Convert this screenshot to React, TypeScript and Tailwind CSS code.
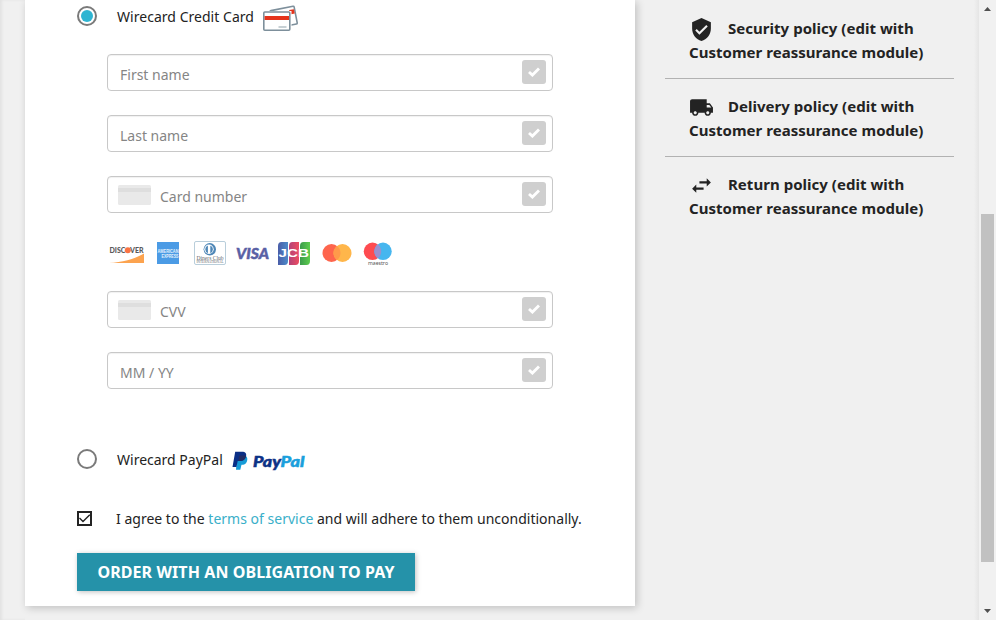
import type { ReactNode } from "react";
import { MdLocalShipping, MdSwapHoriz, MdVerifiedUser } from "react-icons/md";

function Tick() {
  return (
    <span className="mt-[5px] mr-1.5 flex h-6 w-6 items-center justify-center rounded-[3px] bg-[#cfcfcf]">
      <svg width="12" height="10" viewBox="0 0 12 10" fill="none" stroke="#fff" strokeWidth="2.8">
        <path d="M1 4.9 4.4 8.1 11 1.4" />
      </svg>
    </span>
  );
}

function CardThumb() {
  return (
    <svg className="mt-2 ml-2.5 mr-[9px] shrink-0" width="33" height="20" viewBox="0 0 33 20">
      <rect width="33" height="20" rx="1.5" fill="#e9e9e9" />
      <rect y="3" width="33" height="4" fill="#dedede" />
    </svg>
  );
}

function Field({ label, card = false }: { label: string; card?: boolean }) {
  return (
    <div className="flex h-[37px] w-[446px] rounded-[4px] border border-[#c8c8c8] bg-white shadow-[inset_0_1px_1px_rgba(0,0,0,0.06)]">
      {card ? <CardThumb /> : <span className="w-3" />}
      <span className="flex-1 pt-[10px] text-[14px] leading-5 text-[#858585]">{label}</span>
      <Tick />
    </div>
  );
}

function CreditCards() {
  return (
    <svg width="36" height="27" viewBox="0 0 36 27">
      <g transform="rotate(-11 22 10)">
        <rect x="8" y="3" width="24.5" height="18" rx="1" fill="#fff" stroke="#7d8f9b" strokeWidth="1.6" />
        <path d="M27 6h4.800v4.500H27z" fill="#e5331b" />
      </g>
      <rect x="0" y="6" width="28.500" height="21" fill="#fff" />
      <rect x=".8" y="7" width="26" height="18.200" rx="1" fill="#fff" stroke="#7d8f9b" strokeWidth="1.6" />
      <path d="M1.600 11h24.400v4H1.600z" fill="#e5331b" />
      <path d="M15.500 22h8" stroke="#a9b6bd" strokeWidth="1.3" />
    </svg>
  );
}

function PayPal() {
  return (
    <svg width="74" height="20" viewBox="0 0 74 20">
      <path d="M5 5h9c1.600 1.500 1.600 3.700.9 5.400-1 2.600-3 3.400-5.400 3.400L8.300 18.700H4z" fill="#169bd7" />
      <path d="M3.200.7H10c3.500 0 4.800 1.700 4 4.800-.8 3.200-3 4.600-6.200 4.600H5.700L4.400 16H.5z" fill="#0b2f86" />
      <path d="M6.300 10.100h1.500c3.200 0 5.400-1.400 6.200-4.600-.1-.6-.5-.9-1.400-1H7.300z" fill="#222d65" />
      <g fontFamily="Lato, sans-serif" fontWeight="900" fontStyle="italic" fontSize="15" strokeWidth=".5">
        <text x="21" y="15.500" textLength="28" lengthAdjust="spacingAndGlyphs" fill="#0b3286" stroke="#0b3286">Pay</text>
        <text x="48.500" y="15.500" textLength="24" lengthAdjust="spacingAndGlyphs" fill="#1a9fdc" stroke="#1a9fdc">Pal</text>
      </g>
    </svg>
  );
}

function Brands() {
  return (
    <svg className="mt-[26px] block" width="290" height="28" viewBox="0 0 290 28">
      <defs>
        <linearGradient id="jcbBlue"><stop stopColor="#4a5da8" /><stop offset="1" stopColor="#4c8bc9" /></linearGradient>
        <linearGradient id="jcbRed"><stop stopColor="#b24278" /><stop offset="1" stopColor="#ed4c60" /></linearGradient>
        <linearGradient id="jcbGreen"><stop stopColor="#3c9b4c" /><stop offset="1" stopColor="#5dcd4e" /></linearGradient>
      </defs>
      {/* Discover */}
      <path d="M2 24C15 23.500 28 20 37 14.500V24z" fill="#fca34f" />
      <g fontFamily="Lato, sans-serif" fontWeight="900" fontSize="8" fill="#5a5a5a">
        <text x="2.500" y="14" textLength="16" lengthAdjust="spacingAndGlyphs">DISC</text>
        <text x="23" y="14" textLength="13.500" lengthAdjust="spacingAndGlyphs">VER</text>
      </g>
      <circle cx="20.800" cy="11.200" r="3" fill="#fa7444" />
      {/* American Express */}
      <rect x="50" y="3" width="22" height="22" fill="#4b9be5" />
      <g fontFamily="'Liberation Sans', sans-serif" fontWeight="700" fontSize="5" fill="#e4f1fc">
        <text x="50.500" y="13.500" textLength="21" lengthAdjust="spacingAndGlyphs">AMERICAN</text>
        <text x="54.500" y="19" textLength="17" lengthAdjust="spacingAndGlyphs">EXPRESS</text>
      </g>
      {/* Diners Club */}
      <rect x="87.500" y="2.500" width="31" height="23" rx="1.500" fill="#fff" stroke="#b9cedb" />
      <circle cx="102.800" cy="10.300" r="6.200" fill="#4e87b7" />
      <circle cx="102" cy="10.300" r="4.700" fill="#fff" />
      <path d="M100.900 6.400a4.200 4.200 0 0 0 0 7.800zM103.300 6.400a4.200 4.200 0 0 1 0 7.800z" fill="#4e87b7" />
      <g fontFamily="'Liberation Serif', serif" fill="#60656a">
        <text x="89.500" y="20.500" fontSize="6.500" textLength="27" lengthAdjust="spacingAndGlyphs">Diners Club</text>
        <text x="89.500" y="24.300" fontSize="3.800" textLength="27" lengthAdjust="spacingAndGlyphs">INTERNATIONAL</text>
      </g>
      {/* Visa */}
      <text x="129" y="19.500" fontFamily="Lato, sans-serif" fontWeight="900" fontStyle="italic" fontSize="15" textLength="33" lengthAdjust="spacingAndGlyphs" fill="#5960a5" stroke="#5960a5" strokeWidth=".5">VISA</text>
      {/* JCB */}
      <path d="M174.500 3H181v19q0 4-3.500 4H171V7q0-4 3.500-4z" fill="url(#jcbBlue)" />
      <path d="M185.500 3H192v19q0 4-3.500 4H182V7q0-4 3.500-4z" fill="url(#jcbRed)" />
      <path d="M196.500 3H203v19q0 4-3.500 4H193V7q0-4 3.500-4z" fill="url(#jcbGreen)" />
      <text x="171.500" y="18.200" fontFamily="'Liberation Sans', sans-serif" fontWeight="700" fontSize="10.500" textLength="30.500" lengthAdjust="spacingAndGlyphs" fill="#fff">JCB</text>
      {/* Mastercard */}
      <circle cx="224.500" cy="14" r="9" fill="#fe654d" />
      <circle cx="235.500" cy="14" r="9" fill="#ffb64a" />
      <path d="M230 6.900a9 9 0 0 1 0 14.200a9 9 0 0 1 0-14.200z" fill="#ff9a4a" />
      {/* Maestro */}
      <circle cx="265.500" cy="12.300" r="8.700" fill="#fe4b50" />
      <circle cx="276" cy="12.300" r="8.700" fill="#46b6ef" />
      <path d="M270.750 5.350a8.700 8.700 0 0 1 0 13.900a8.700 8.700 0 0 1 0-13.900z" fill="#9b90cf" />
      <text x="261" y="25.500" fontFamily="'Noto Sans', sans-serif" fontSize="4.500" textLength="20" lengthAdjust="spacingAndGlyphs" fill="#555">maestro</text>
    </svg>
  );
}

function Radio({ checked = false }: { checked?: boolean }) {
  return (
    <span className="flex h-5 w-5 items-center justify-center rounded-full border-2 border-[#7a7a7a] bg-white">
      {checked && <span className="h-3 w-3 rounded-full bg-[#2fb5d2]" />}
    </span>
  );
}

function Policy({ icon, name, last = false }: { icon: ReactNode; name: string; last?: boolean }) {
  return (
    <li className={last ? "h-[78px] pl-6 pt-[15px]" : "h-[78px] border-b border-[#b2b2b2] pl-6 pt-[15px]"}>
      <div className="flex h-6">
        {icon}
        <span className="ml-[14px] whitespace-nowrap">{name} policy (edit with</span>
      </div>
      <div className="h-6 whitespace-nowrap">Customer reassurance module)</div>
    </li>
  );
}

export default function App() {
  return (
    <div className="flex h-[620px] w-[996px] overflow-hidden bg-[#f0f0f0] font-['Noto_Sans',sans-serif] text-[#232323]">
      <div className="w-[25px] shrink-0 shadow-[inset_2px_0_3px_rgba(0,0,0,0.06)]" />
      <main className="h-[606px] w-[610px] shrink-0 bg-white pl-[52px] shadow-[2px_2px_8px_rgba(0,0,0,0.2)]">
        <div className="flex h-[54px] text-[14px] leading-5">
          <div className="mt-1.5"><Radio checked /></div>
          <span className="mt-[7px] ml-5 w-[146px] tracking-[0.03px] whitespace-nowrap">Wirecard Credit Card</span>
          <div className="mt-[5px]"><CreditCards /></div>
        </div>
        <div className="ml-[30px]">
          <div className="flex flex-col gap-6">
            <Field label="First name" />
            <Field label="Last name" />
            <Field label="Card number" card />
          </div>
          <Brands />
          <div className="mt-6 flex flex-col gap-6">
            <Field label="CVV" card />
            <Field label="MM / YY" />
          </div>
        </div>
        <div className="mt-[60px] flex h-[22px] text-[14px] leading-[22px]">
          <Radio />
          <span className="ml-5 w-[115px] whitespace-nowrap">Wirecard PayPal</span>
          <div className="mt-0.5"><PayPal /></div>
        </div>
        <div className="mt-[37px] flex h-[22px] text-[14px] leading-[22px]">
          <svg className="mt-[3px] mr-6" width="15" height="15" viewBox="0 0 15 15" fill="none" stroke="#232323">
            <rect x="1" y="1" width="13" height="13" strokeWidth="2" />
            <path d="m2.500 7 3.500 3.500L12.800 3.700" strokeWidth="1.400" />
          </svg>
          <p className="tracking-[0.01px] whitespace-nowrap">
            I agree to the <a className="text-[#3aafc9]">terms of service</a> and will adhere to them unconditionally.
          </p>
        </div>
        <button className="mt-[23px] block h-[38px] w-[338px] bg-[#2592a9] text-[16px] font-bold tracking-[0.09px] whitespace-nowrap text-white shadow-[1px_1px_5px_rgba(0,0,0,0.25)]">
          ORDER WITH AN OBLIGATION TO PAY
        </button>
      </main>
      <aside className="ml-[30px] w-[289px] shrink-0">
        <ul className="pt-[1px] text-[15px] leading-6 font-bold tracking-[0.03px]">
          <Policy icon={<MdVerifiedUser size={25} className="mt-px shrink-0" />} name="Security" />
          <Policy icon={<MdLocalShipping size={25} className="mt-px shrink-0" />} name="Delivery" />
          <Policy icon={<MdSwapHoriz size={25} className="mt-px shrink-0" />} name="Return" last />
        </ul>
      </aside>
      <div className="w-[25px] shrink-0 bg-linear-to-r from-[#f0f0f0] from-80% to-[#e5e5e5]" />
      <div className="flex w-[17px] shrink-0 flex-col items-center bg-[#f1f1f1]">
        <svg className="mt-[7px]" width="7" height="4" viewBox="0 0 7 4"><path d="M0 4 3.500 0 7 4z" fill="#505050" /></svg>
        <div className="mt-[203px] h-[348px] w-[13px] bg-[#c1c1c1]" />
        <svg className="mt-[47px]" width="7" height="4" viewBox="0 0 7 4"><path d="M0 0h7L3.500 4z" fill="#505050" /></svg>
      </div>
    </div>
  );
}
